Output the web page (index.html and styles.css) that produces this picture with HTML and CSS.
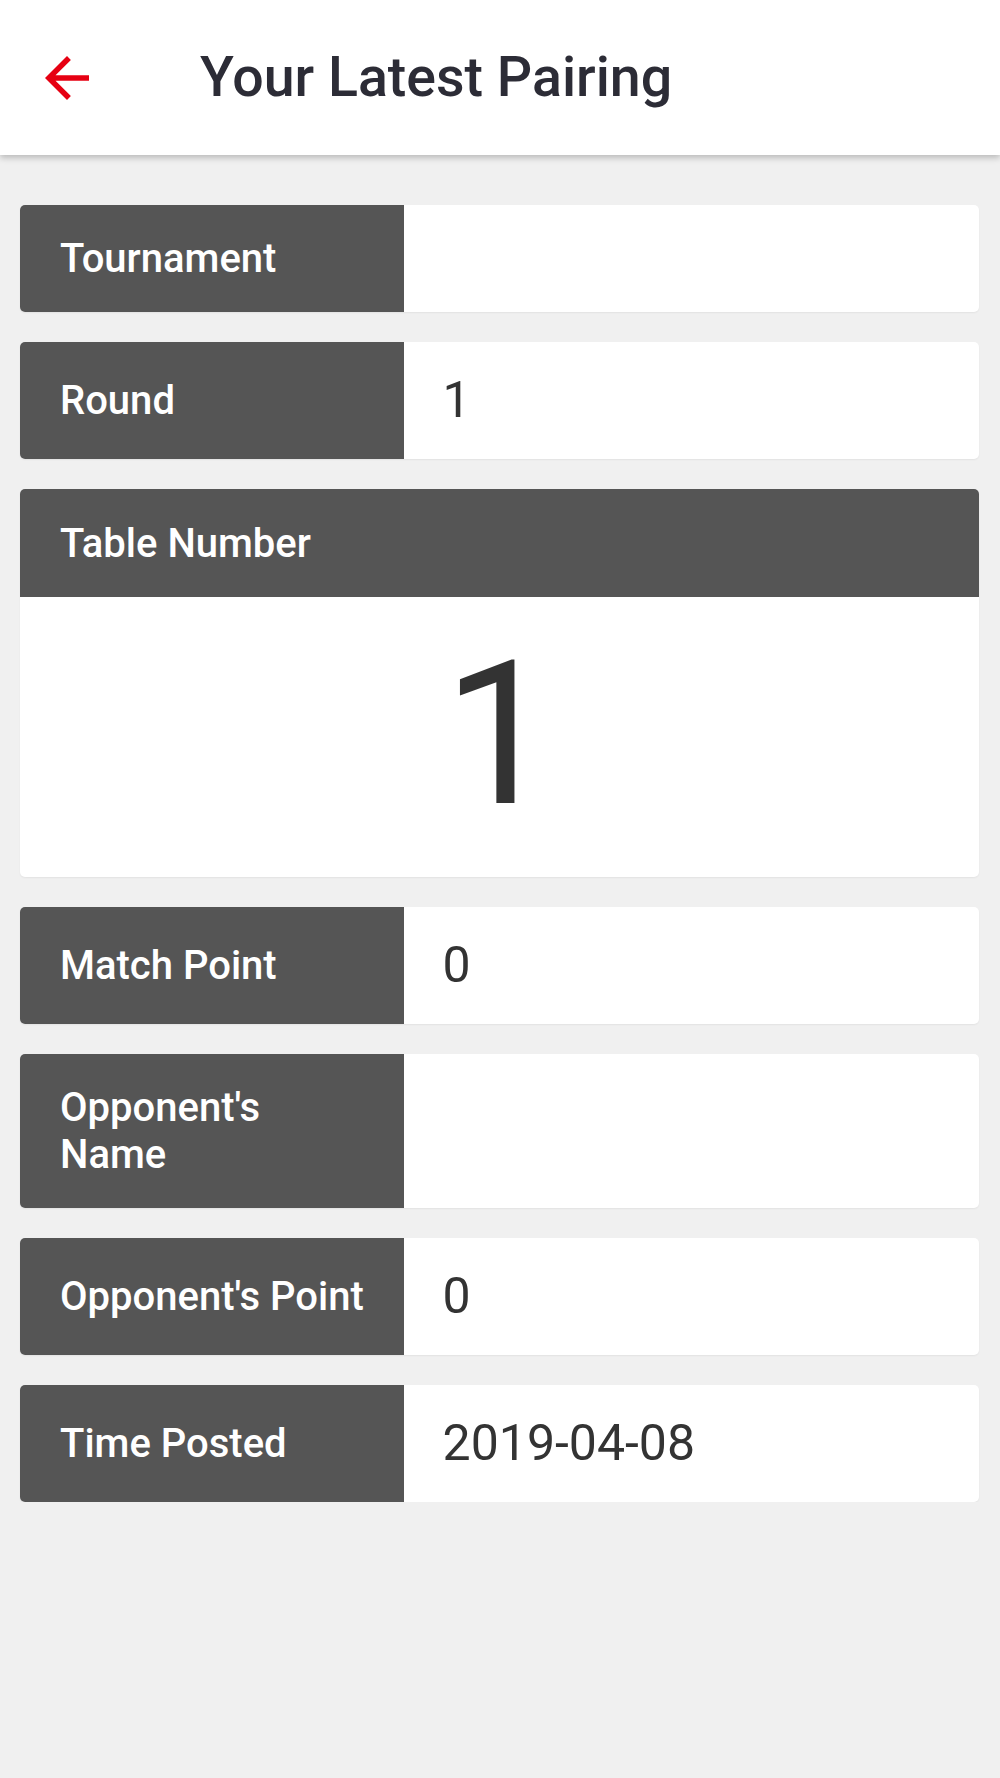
FILE: index.html
```html
<!DOCTYPE html>
<html lang="en">
<head>
    <meta charset="UTF-8">
    <meta name="viewport" content="width=device-width, initial-scale=1.0">
    <title>Your Latest Pairing</title>
    <link rel="stylesheet" href="styles.css">
</head>
<body>

    <header class="topbar">
        <a href="#" class="back">
            <svg viewBox="4 4 16 16" width="44" height="44">
                <path d="M20 11H7.83l5.59-5.59L12 4l-8 8 8 8 1.41-1.41L7.83 13H20v-2z" fill="#e60012"/>
            </svg>
        </a>
        <h1 class="title">Your Latest Pairing</h1>
    </header>

    <main class="content">
        <div class="row">
            <div class="label">Tournament</div>
            <div class="value"></div>
        </div>

        <div class="row">
            <div class="label">Round</div>
            <div class="value">1</div>
        </div>

        <div class="table-card">
            <div class="table-head">Table Number</div>
            <div class="table-num">1</div>
        </div>

        <div class="row">
            <div class="label">Match Point</div>
            <div class="value">0</div>
        </div>

        <div class="row">
            <div class="label">Opponent's Name</div>
            <div class="value"></div>
        </div>

        <div class="row">
            <div class="label">Opponent's Point</div>
            <div class="value">0</div>
        </div>

        <div class="row">
            <div class="label">Time Posted</div>
            <div class="value">2019-04-08</div>
        </div>
    </main>

</body>
</html>
```

FILE: styles.css
```css
body {
    margin: 0;
    padding: 0;
    background-color: #f0f0f0;
    font-family: Roboto, "Noto Sans", sans-serif;
}

.topbar {
    height: 155px;
    background: #fff;
    display: flex;
    align-items: center;
    padding-left: 45px;
    box-shadow: 0 3px 6px rgba(0, 0, 0, 0.22);
    position: relative;
    z-index: 1;
}

.back {
    display: flex;
    width: 44px;
    height: 44px;
}

.title {
    margin: 0 0 0 111px;
    font-size: 55.5px;
    font-weight: 500;
    color: #2c2c36;
}

.content {
    padding: 50px 21px 0 20px;
    display: flex;
    flex-direction: column;
    gap: 30px;
}

.row {
    display: flex;
    background: #fff;
    border-radius: 5px;
    overflow: hidden;
    box-shadow: 0 1px 2px rgba(0, 0, 0, 0.06);
}

.label {
    flex: 0 0 40%;
    box-sizing: border-box;
    background: #555555;
    color: #fff;
    font-size: 40px;
    line-height: 47px;
    font-weight: 500;
    padding: 30px 36px 30px 40px;
    display: flex;
    align-items: center;
}

.value {
    flex: 1;
    color: #333;
    font-size: 50px;
    line-height: 57px;
    padding: 30px 39px;
    display: flex;
    align-items: center;
}

.table-card {
    background: #fff;
    border-radius: 5px;
    overflow: hidden;
    box-shadow: 0 1px 2px rgba(0, 0, 0, 0.06);
}

.table-head {
    background: #555555;
    color: #fff;
    font-size: 40px;
    line-height: 47px;
    font-weight: 500;
    padding: 31px 40px 30px;
}

.table-num {
    text-align: center;
    color: #333;
    font-size: 200px;
    line-height: 234px;
    padding: 21px 0 25px;
}
```
